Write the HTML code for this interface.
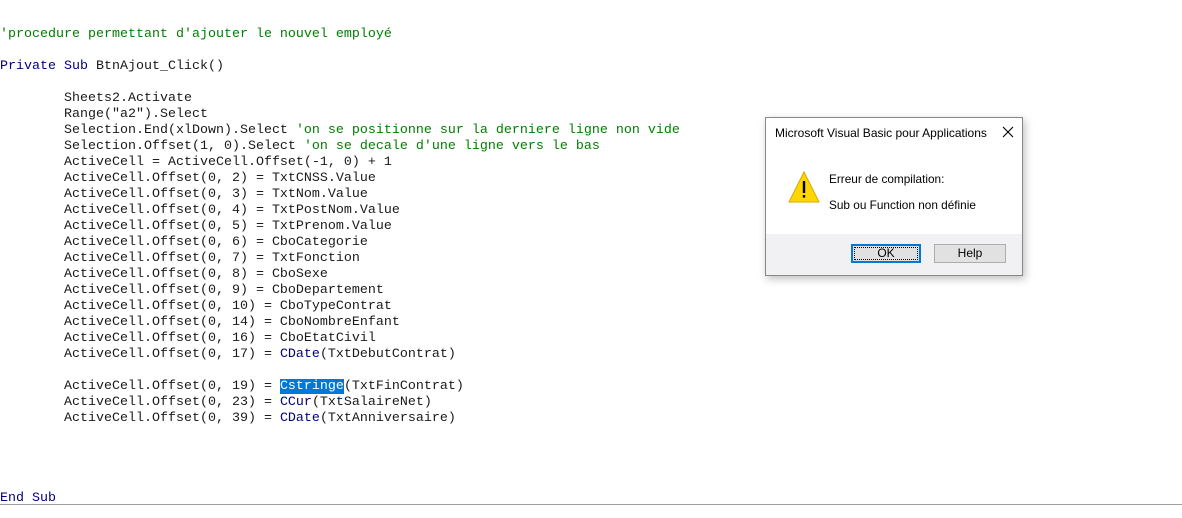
<!DOCTYPE html>
<html><head><meta charset="utf-8"><style>
html,body{margin:0;padding:0;background:#fff;width:1182px;height:518px;overflow:hidden;position:relative}
pre{position:absolute;left:0;top:27px;margin:0;font-family:"Liberation Mono",monospace;font-size:13.33px;line-height:16px;color:#1a1a1a}
.c{color:#008000}.k{color:#00007f}.f{color:#00007f}
.sel{background:#0078d7;color:#fff}
.hr{position:absolute;left:0;top:504px;width:1182px;height:1px;background:#a0a0a0}
.dlg{position:absolute;left:765px;top:117px;width:256px;height:157px;background:#fff;border:1px solid #888;box-shadow:2px 3px 8px rgba(0,0,0,.25);font-family:"Liberation Sans",sans-serif;color:#000}
.t{position:absolute;left:9px;top:8px;font-size:12px}
.m1{position:absolute;left:63px;top:54px;font-size:11.8px}
.m2{position:absolute;left:63px;top:80px;font-size:11.8px}
.foot{position:absolute;left:0;top:116px;width:256px;height:41px;background:#f1f0f3}
.b{position:absolute;top:10px;height:19px;width:70px;box-sizing:border-box;border:1px solid #adadad;background:#e1e1e1;font-size:12px;text-align:center;line-height:17px}
.ok{left:85px;border:2px solid #0078d7;outline:1px dotted #000;outline-offset:-4px;line-height:15px}
.hp{left:168px;width:72px}
</style></head><body>
<pre><span class="c">'procedure permettant d'ajouter le nouvel employé</span>

<span class="k">Private Sub</span> BtnAjout_Click()

        Sheets2.Activate
        Range("a2").Select
        Selection.End(xlDown).Select <span class="c">'on se positionne sur la derniere ligne non vide</span>
        Selection.Offset(1, 0).Select <span class="c">'on se decale d'une ligne vers le bas</span>
        ActiveCell = ActiveCell.Offset(-1, 0) + 1
        ActiveCell.Offset(0, 2) = TxtCNSS.Value
        ActiveCell.Offset(0, 3) = TxtNom.Value
        ActiveCell.Offset(0, 4) = TxtPostNom.Value
        ActiveCell.Offset(0, 5) = TxtPrenom.Value
        ActiveCell.Offset(0, 6) = CboCategorie
        ActiveCell.Offset(0, 7) = TxtFonction
        ActiveCell.Offset(0, 8) = CboSexe
        ActiveCell.Offset(0, 9) = CboDepartement
        ActiveCell.Offset(0, 10) = CboTypeContrat
        ActiveCell.Offset(0, 14) = CboNombreEnfant
        ActiveCell.Offset(0, 16) = CboEtatCivil
        ActiveCell.Offset(0, 17) = <span class="f">CDate</span>(TxtDebutContrat)

        ActiveCell.Offset(0, 19) = <span class="sel">Cstringe</span>(TxtFinContrat)
        ActiveCell.Offset(0, 23) = <span class="f">CCur</span>(TxtSalaireNet)
        ActiveCell.Offset(0, 39) = <span class="f">CDate</span>(TxtAnniversaire)




<span class="k">End Sub</span></pre>
<div class="hr"></div>
<div class="dlg">
<div class="t">Microsoft Visual Basic pour Applications</div>
<svg style="position:absolute;left:236px;top:8px" width="12" height="12" viewBox="0 0 12 12"><path d="M1 1 L11 11 M11 1 L1 11" stroke="#000" stroke-width="1.1"/></svg>
<svg style="position:absolute;left:22px;top:52px" width="32" height="34" viewBox="0 0 32 34"><path d="M16 2 L31 32 L1 32 Z" fill="#ffd700" stroke="#d4a800" stroke-width="1"/><rect x="14.8" y="11" width="2.4" height="12" fill="#000"/><rect x="14.8" y="25" width="2.4" height="2.6" fill="#000"/></svg>
<div class="m1">Erreur de compilation:</div>
<div class="m2">Sub ou Function non définie</div>
<div class="foot">
<div class="b ok">OK</div>
<div class="b hp">Help</div>
</div>
</div>
</body></html>
